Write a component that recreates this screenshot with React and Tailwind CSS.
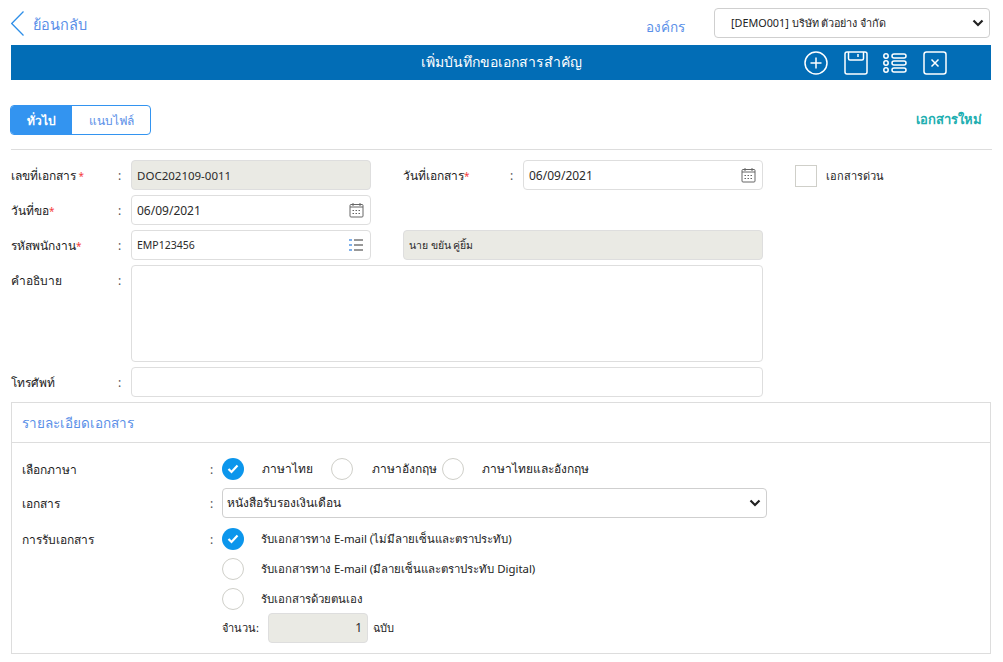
function Label({ text, req, star, w = 'w-[107px]' }) {
  return (
    <div className={`${w} shrink-0 pt-[2px] text-xs text-[#222]`}>
      {text}
      {req ? <span className="text-[10px] text-[#f5403d]">{star ? ' *' : '*'}</span> : null}
    </div>
  )
}

function Colon({ className = 'w-[13px]' }) {
  return <div className={`${className} shrink-0 pt-[2px] text-xs text-[#555]`}>:</div>
}

function CalIcon() {
  return (
    <svg width="15" height="16" viewBox="0 0 15 16" fill="none" stroke="#666" strokeWidth="1" className="absolute right-[6px] top-[6px]">
      <rect x="1" y="2.5" width="13" height="12.5" rx="1" />
      <path d="M1 5h13M4 1v3M11 1v3" />
      <path d="M3.500 8.500h2M6.500 8.500h2M9.500 8.500h2M3.500 11.500h2M6.500 11.500h2M9.500 11.500h2" strokeDasharray="1.500 1" />
    </svg>
  )
}

function Input({ value, w, gray, size = 'text-xs', children }) {
  return (
    <div
      className={`${w} relative flex h-[30px] shrink-0 items-center rounded-[4px] border border-[#dedede] px-[5px] pt-[2px] ${gray ? 'bg-[#eaeae4]' : 'bg-white'} ${size} text-[#2b2b2b]`}
    >
      {value}
      {children}
    </div>
  )
}

function Radio({ on }) {
  if (on) {
    return (
      <span className="flex h-[22px] w-[22px] shrink-0 items-center justify-center rounded-full bg-[#0c96ec]">
        <svg width="12" height="10" viewBox="0 0 12 10" fill="none" stroke="white" strokeWidth="2.2">
          <path d="M1.500 5l3 3 6-6.500" />
        </svg>
      </span>
    )
  }
  return <span className="h-[22px] w-[22px] shrink-0 rounded-full border border-[#cfcfc9] bg-white" />
}

export default function App() {
  return (
    <div className="h-[662px] w-[1003px] overflow-hidden bg-white px-[11px] font-['Noto_Sans','DejaVu_Sans',sans-serif]">
      <div className="flex h-[45px] items-center pt-[1px]">
        <svg width="13" height="25" viewBox="0 0 13 25" fill="none" stroke="#2f8fe8" strokeWidth="1.300">
          <path d="M12.500 .500L.700 12.500l11.800 12" />
        </svg>
        <span className="ml-[9px] pt-[3px] text-[14.500px] text-[#5a8fe8]">ย้อนกลับ</span>
        <span className="ml-auto pt-[8px] text-[13.500px] text-[#5a8fe8]">องค์กร</span>
        <div className="ml-[29px] mr-[2px] flex h-[30px] w-[276px] items-center rounded-[4px] border border-[#cfcfcf] pl-[16px] pr-[5px] text-[10.800px] text-[#222]">
          [DEMO001] บริษัท ตัวอย่าง จำกัด
          <svg width="12" height="8" viewBox="0 0 12 8" fill="none" stroke="#222" strokeWidth="2.2" className="ml-auto">
            <path d="M1.500 1.500L6 6l4.500-4.500" />
          </svg>
        </div>
      </div>

      <div className="relative flex h-[35px] w-[980px] items-center justify-center bg-[#026db6] pb-[2px] text-sm text-white">
        เพิ่มบันทึกขอเอกสารสำคัญ
        <div className="absolute right-[44px] top-[6px] flex h-[24px] items-center gap-[15px]">
          <svg width="24" height="24" viewBox="0 0 24 24" fill="none" stroke="white" strokeWidth="1.500" className="mr-[1px]">
            <circle cx="12" cy="12" r="11" />
            <path d="M12 6.500v11M6.500 12h11" />
          </svg>
          <svg width="24" height="24" viewBox="0 0 24 24" fill="none" stroke="white" strokeWidth="1.500">
            <rect x="1" y="1" width="22" height="22" rx="2" />
            <path d="M4.500 1v6.500a1.500 1.500 0 0 0 1.500 1.500h12a1.500 1.500 0 0 0 1.500-1.500V1M14 3v3" />
          </svg>
          <svg width="24" height="20" viewBox="0 0 24 20" fill="none" stroke="white" strokeWidth="1.500" className="mr-[1px]">
            <circle cx="3" cy="3" r="2.200" />
            <circle cx="3" cy="10" r="2.200" />
            <circle cx="3" cy="17" r="2.200" />
            <rect x="9" y="1" width="14" height="4" rx="2" />
            <rect x="9" y="8" width="14" height="4" rx="2" />
            <rect x="9" y="15" width="14" height="4" rx="2" />
          </svg>
          <svg width="24" height="24" viewBox="0 0 24 24" fill="none" stroke="white" strokeWidth="1.500">
            <rect x="1" y="1" width="22" height="22" rx="2.500" />
            <path d="M8.500 8.500l7 7M15.500 8.500l-7 7" />
          </svg>
        </div>
      </div>

      <div className="mt-[25px] flex h-[45px] items-start border-b border-[#dddddd]">
        <div className="ml-[-1px] flex h-[30px] w-[141px] overflow-hidden rounded-[4px] border border-[#3394f0] text-xs font-bold">
          <div className="flex w-[61px] items-center justify-center bg-[#3394f0] pt-[1px] text-white">ทั่วไป</div>
          <div className="flex flex-1 items-center justify-center pt-[1px] font-normal text-[#5a8fe8]">แนบไฟล์</div>
        </div>
        <span className="ml-auto mr-[10px] mt-[5px] text-[13px] font-bold text-[#20aeb0]">เอกสารใหม่</span>
      </div>

      <div className="mt-[10px] flex flex-col gap-[5px]">
        <div className="flex h-[30px] items-center">
          <Label text="เลขที่เอกสาร" req star />
          <Colon />
          <Input value="DOC202109-0011" w="w-[240px]" size="text-[11.500px]" gray />
          <div className="w-[32px] shrink-0" />
          <Label text="วันที่เอกสาร" req />
          <Colon />
          <Input value="06/09/2021" w="w-[240px]">
            <CalIcon />
          </Input>
          <span className="ml-[32px] mt-[2px] h-[22px] w-[22px] shrink-0 border border-[#cfcfc9]" />
          <span className="ml-[9px] pt-[2px] text-[11px] text-[#222]">เอกสารด่วน</span>
        </div>
        <div className="flex h-[30px] items-center">
          <Label text="วันที่ขอ" req />
          <Colon />
          <Input value="06/09/2021" w="w-[240px]">
            <CalIcon />
          </Input>
        </div>
        <div className="flex h-[30px] items-center">
          <Label text="รหัสพนักงาน" req />
          <Colon />
          <Input value="EMP123456" w="w-[240px]" size="text-[10.500px]">
            <svg width="14" height="14" viewBox="0 0 14 14" className="absolute right-[7px] top-[7px]" fill="none">
              <path d="M5 2h9M5 7h9M5 12h9" stroke="#333" strokeWidth="1" />
              <path d="M0 1h3v2H0zM0 6h3v2H0zM0 11h3v2H0z" fill="#7fb0ea" />
            </svg>
          </Input>
          <div className="w-[32px] shrink-0" />
          <Input value="นาย ขยัน คู่ยิ้ม" w="w-[360px]" size="text-[10.500px]" gray />
        </div>
        <div className="flex items-start">
          <div className="flex pt-[6px]">
            <Label text="คำอธิบาย" />
            <Colon />
          </div>
          <div className="h-[97px] w-[632px] rounded-[4px] border border-[#dedede]" />
        </div>
        <div className="flex h-[30px] items-center">
          <Label text="โทรศัพท์" />
          <Colon />
          <Input value="" w="w-[632px]" />
        </div>
      </div>

      <div className="mt-[5px] h-[252px] w-[980px] border border-[#dddddd]">
        <div className="flex h-[40px] items-center border-b border-[#dddddd] pl-[10px] pt-[2px] text-[13.500px] text-[#5a8fe8]">
          รายละเอียดเอกสาร
        </div>
        <div className="flex flex-col pl-[10px] pt-[15px]">
          <div className="flex h-[22px] items-center">
            <Label text="เลือกภาษา" w="w-[188px]" />
            <Colon className="w-[12px]" />
            <Radio on />
            <span className="ml-[18px] w-[69px] text-xs text-[#222]">ภาษาไทย</span>
            <Radio />
            <span className="ml-[19px] w-[70px] text-xs text-[#222]">ภาษาอังกฤษ</span>
            <Radio />
            <span className="ml-[18px] text-xs text-[#222]">ภาษาไทยและอังกฤษ</span>
          </div>
          <div className="mt-[8px] flex h-[30px] items-center">
            <Label text="เอกสาร" w="w-[188px]" />
            <Colon className="w-[12px]" />
            <div className="flex h-[30px] w-[545px] items-center rounded-[4px] border border-[#cfcfcf] pl-[4px] pr-[5px] text-xs text-[#222]">
              หนังสือรับรองเงินเดือน
              <svg width="12" height="8" viewBox="0 0 12 8" fill="none" stroke="#222" strokeWidth="2.2" className="ml-auto">
                <path d="M1.500 1.500L6 6l4.500-4.500" />
              </svg>
            </div>
          </div>
          <div className="mt-[10px] flex items-start">
            <div className="flex h-[22px] items-center">
              <Label text="การรับเอกสาร" w="w-[188px]" />
              <Colon className="w-[12px]" />
            </div>
            <div className="flex flex-col gap-[8px]">
              <div className="flex h-[22px] items-center text-[11.400px] text-[#222]">
                <Radio on />
                <span className="ml-[17px]">รับเอกสารทาง E-mail (ไม่มีลายเซ็นและตราประทับ)</span>
              </div>
              <div className="flex h-[22px] items-center text-[11.400px] text-[#222]">
                <Radio />
                <span className="ml-[17px]">รับเอกสารทาง E-mail (มีลายเซ็นและตราประทับ Digital)</span>
              </div>
              <div className="flex h-[22px] items-center text-[11.400px] text-[#222]">
                <Radio />
                <span className="ml-[17px]">รับเอกสารด้วยตนเอง</span>
              </div>
              <div className="mt-[-5px] flex h-[30px] items-center text-[11px] text-[#222]">
                <span className="w-[46px]">จำนวน:</span>
                <div className="flex h-[30px] w-[100px] items-center justify-end rounded-[4px] border border-[#dedede] bg-[#eaeae4] pr-[5px] text-xs text-[#2b2b2b]">
                  1
                </div>
                <span className="ml-[5px]">ฉบับ</span>
              </div>
            </div>
          </div>
        </div>
      </div>
    </div>
  )
}
